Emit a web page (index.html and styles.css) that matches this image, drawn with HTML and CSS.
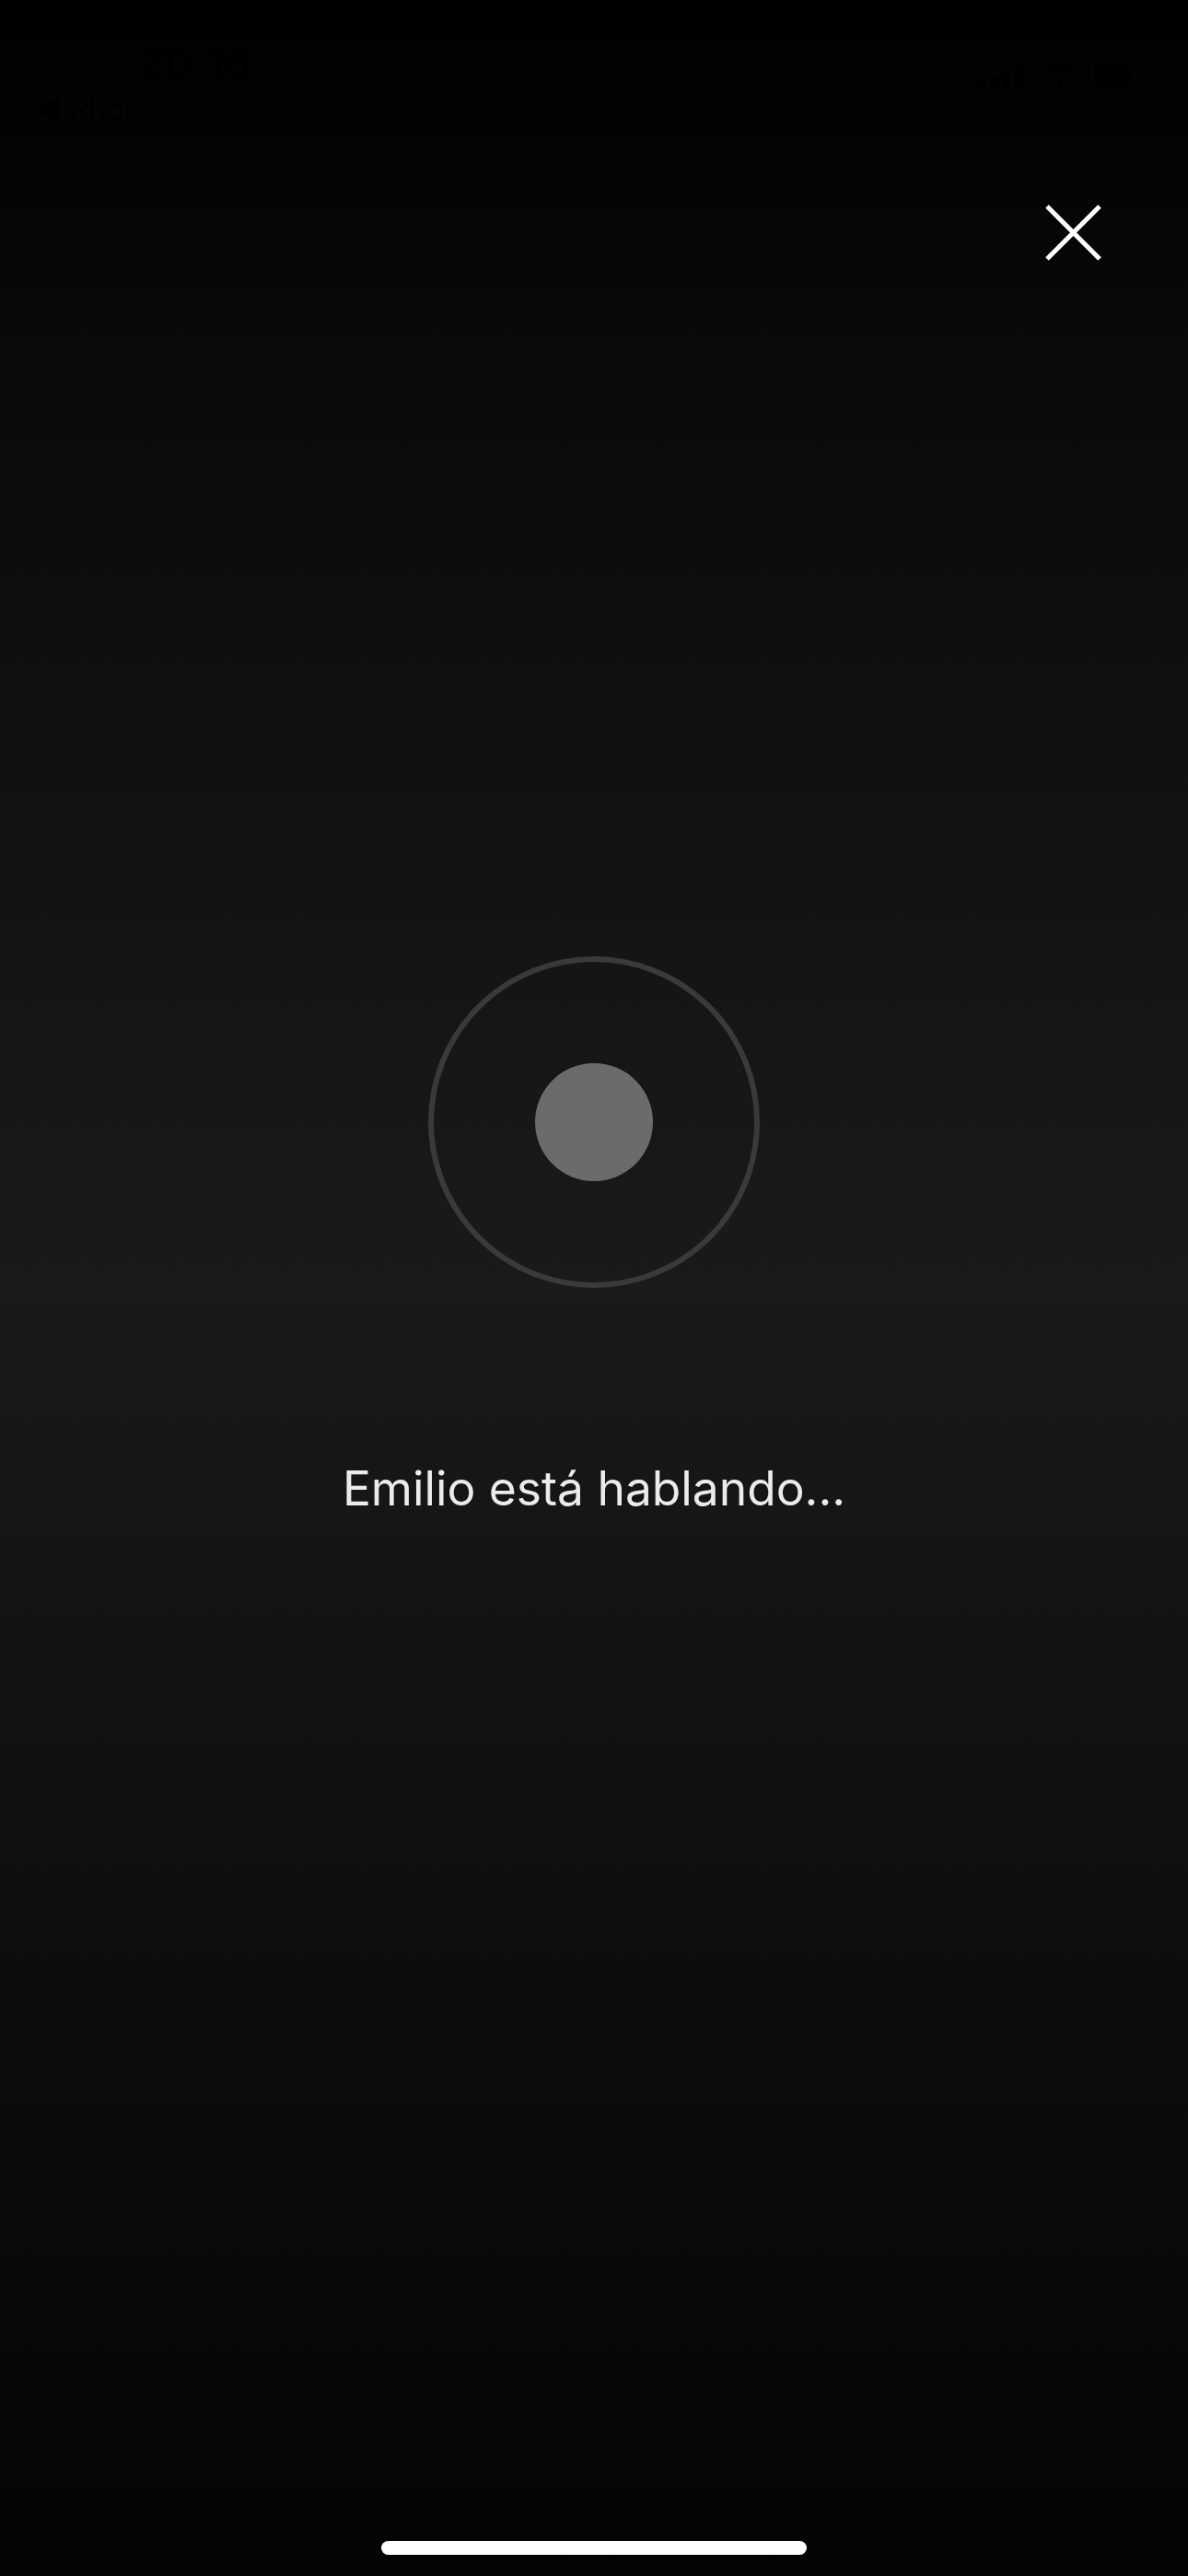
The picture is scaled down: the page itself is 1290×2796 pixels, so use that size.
FILE: index.html
```html
<!DOCTYPE html>
<html lang="es">
<head>
<meta charset="utf-8">
<title>Emilio está hablando</title>
<link rel="stylesheet" href="styles.css">
</head>
<body>
<div class="screen">
  <div class="status">
    <div class="status-left">
      <div class="time">20:16</div>
      <div class="back">◀ Photos</div>
    </div>
    <div class="status-right">
      <svg width="50" height="32" viewBox="0 0 50 32"><rect x="0" y="22" width="9" height="10" rx="2" fill="#000"/><rect x="13" y="16" width="9" height="16" rx="2" fill="#000"/><rect x="26" y="9" width="9" height="23" rx="2" fill="#000"/><rect x="39" y="1" width="9" height="31" rx="2" fill="#000"/></svg>
      <svg width="44" height="32" viewBox="0 0 44 32"><path d="M22 30 L30 22 A11 11 0 0 0 14 22 Z" fill="#000"/><path d="M6 14 A22 22 0 0 1 38 14" stroke="#000" stroke-width="5" fill="none"/></svg>
      <div class="battery"><div class="battery-fill"></div></div>
    </div>
  </div>
  <div class="topbar">
    <button class="close" aria-label="Cerrar">
      <svg width="61" height="61" viewBox="0 0 61 61"><path d="M2 2 L59 59 M59 2 L2 59" stroke="#ffffff" stroke-width="5" fill="none"/></svg>
    </button>
  </div>
  <div class="stage">
    <div class="ring"><div class="dot"></div></div>
    <p class="caption">Emilio está hablando...</p>
  </div>
  <div class="home-bar"></div>
</div>
</body>
</html>
```
FILE: styles.css
```css
html, body {
  margin: 0;
  padding: 0;
}
body {
  width: 1290px;
  height: 2796px;
  overflow: hidden;
  background: linear-gradient(180deg, #010101 0%, #030303 5%, #0a0a0a 14%, #121212 32%, #191919 47%, #1a1a1a 50%, #141414 62%, #0e0e0e 75%, #090909 88%, #040404 100%);
  font-family: Inter, "Noto Sans", "Liberation Sans", sans-serif;
  color: #ebebeb;
}
.screen {
  height: 2796px;
  display: flex;
  flex-direction: column;
}
.status {
  height: 150px;
  box-sizing: border-box;
  padding: 46px 40px 0 38px;
  display: flex;
  justify-content: space-between;
  align-items: flex-start;
}
.status-left {
  display: flex;
  flex-direction: column;
  align-items: flex-start;
}
.time {
  margin-left: 112px;
  font-size: 46px;
  font-weight: 600;
  line-height: 46px;
  color: #000;
}
.back {
  margin-top: 10px;
  font-size: 32px;
  line-height: 34px;
  color: #000;
}
.status-right {
  margin-top: 20px;
  display: flex;
  gap: 16px;
  align-items: center;
}
.battery {
  width: 62px;
  height: 30px;
  border: 3px solid #000;
  border-radius: 9px;
  box-sizing: border-box;
  padding: 3px;
}
.battery-fill {
  width: 70%;
  height: 100%;
  background: #000;
  border-radius: 4px;
}
.topbar {
  display: flex;
  justify-content: flex-end;
  padding: 72px 94px 0 0;
}
.close {
  background: none;
  border: 0;
  padding: 0;
  width: 61px;
  height: 61px;
  display: block;
}
.close svg {
  display: block;
}
.stage {
  display: flex;
  flex-direction: column;
  align-items: center;
  padding-top: 755px;
}
.ring {
  width: 360px;
  height: 360px;
  box-sizing: border-box;
  border: 6px solid #3a3a3a;
  border-radius: 50%;
  display: flex;
  align-items: center;
  justify-content: center;
}
.dot {
  width: 128px;
  height: 128px;
  border-radius: 50%;
  background: #6b6b6b;
}
.caption {
  margin: 187px 0 0;
  font-size: 51.5px;
  line-height: 60px;
  font-weight: 400;
  color: #ebebeb;
  letter-spacing: 0;
}
.home-bar {
  margin: auto auto 23px;
  width: 462px;
  height: 15px;
  border-radius: 8px;
  background: #ffffff;
}
```
